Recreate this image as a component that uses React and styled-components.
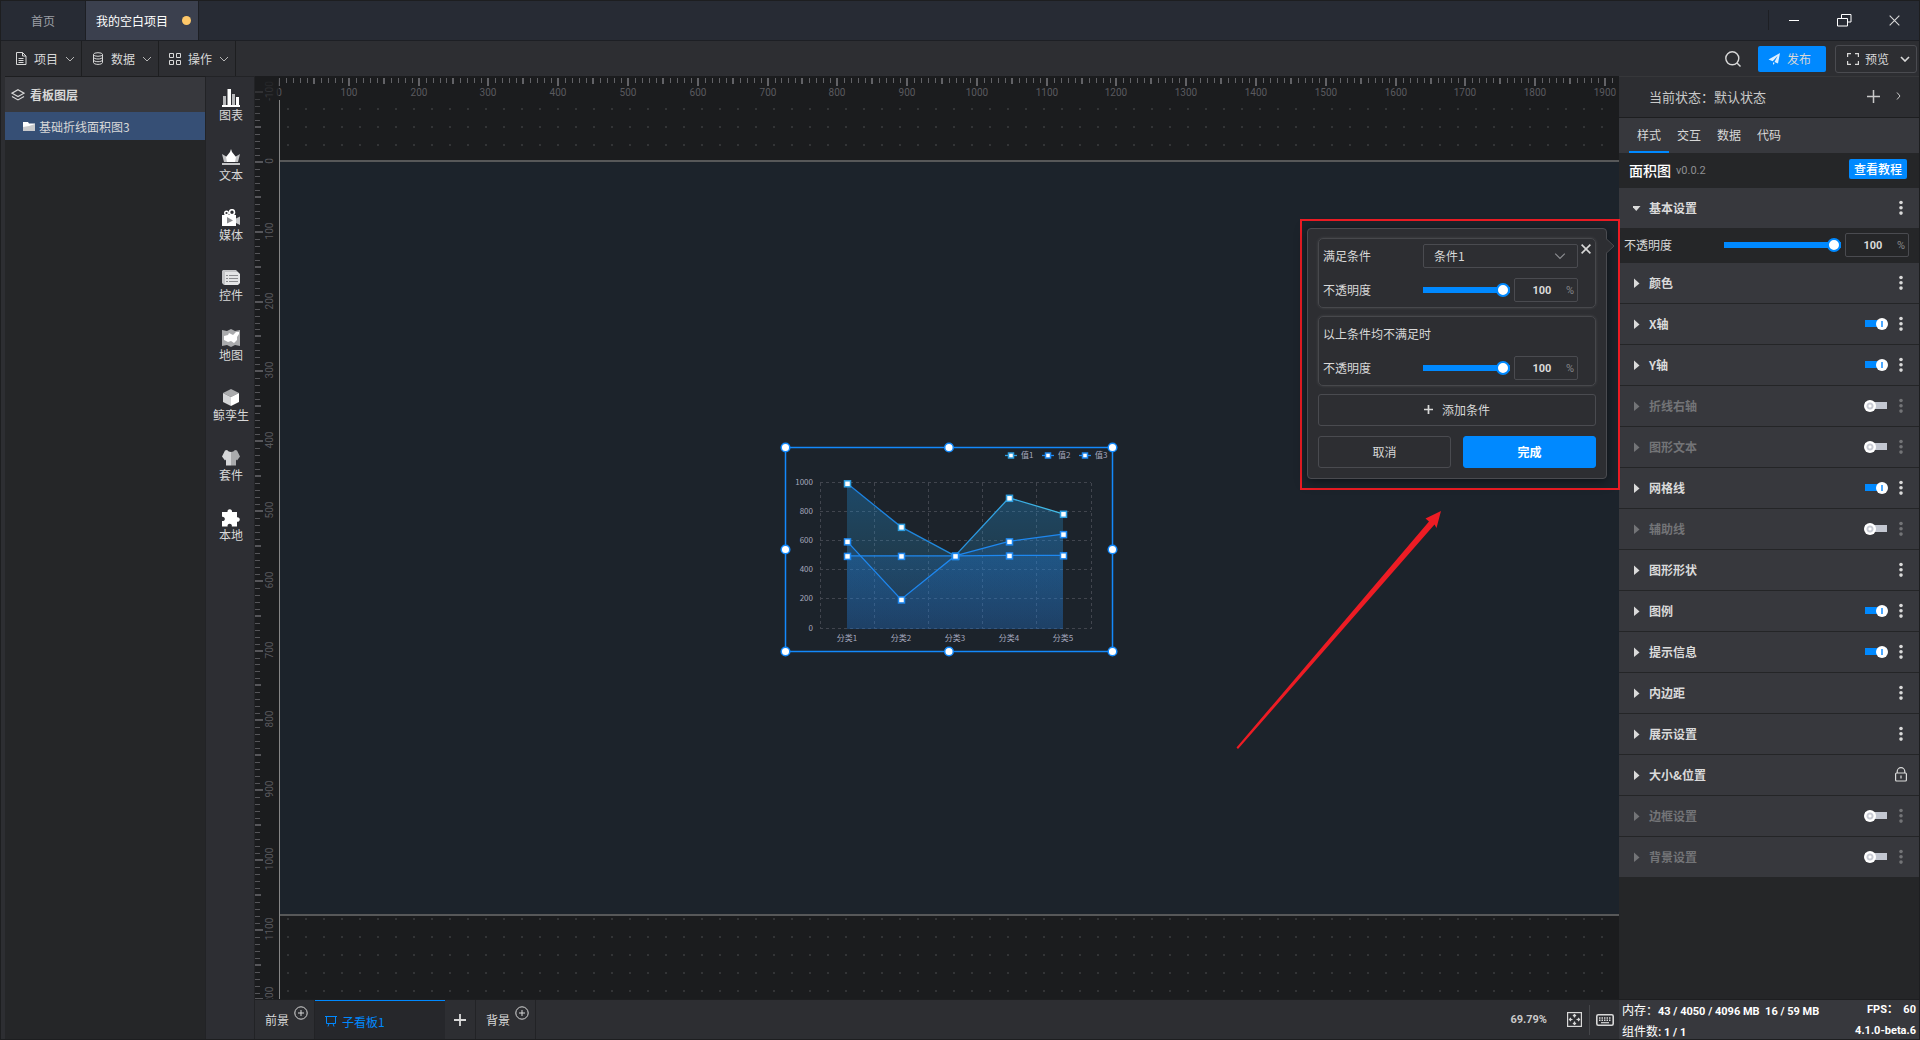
import React, { useLayoutEffect, useRef, useState } from 'react'
import styled, { createGlobalStyle, css } from 'styled-components'

const GlobalStyle = createGlobalStyle`
  * {
    box-sizing: border-box;
  }

  body {
    margin: 0;
    background: #1d1e20;
    color: #d8d8d8;
    font-family: 'Noto Sans CJK SC', sans-serif;
    font-size: 12px;
  }

  button, input, select {
    font: inherit;
    color: inherit;
    margin: 0;
  }

  button {
    background: none;
    border: none;
    padding: 0;
    cursor: pointer;
  }

  svg {
    display: block;
    flex: none;
  }
`

const digits = css`
  font-family: Roboto, 'Noto Sans CJK SC', sans-serif;
  font-size: 11px;
`

const Shell = styled.div`
  display: flex;
  flex-direction: column;
  height: 100vh;
  border: 1px solid #1d1e20;
  overflow: hidden;
`

/* ---------- title bar ---------- */

const TitleBar = styled.header`
  display: flex;
  flex: none;
  height: 40px;
  background: #272b34;
  border-bottom: 1px solid #1d1f24;
`

const ProjectTab = styled.button`
  display: flex;
  align-items: center;
  justify-content: space-between;
  width: ${(p) => (p.$active ? '113px' : '85px')};
  padding: 0 ${(p) => (p.$active ? '7px 0 10px' : '30px')};
  line-height: 16px;
  border-right: 1px solid #1d1f24;
  background: ${(p) => (p.$active ? '#3b404e' : 'transparent')};
  color: ${(p) => (p.$active ? '#fff' : '#9c9fa5')};
`

const Unsaved = styled.span`
  width: 9px;
  height: 9px;
  border-radius: 50%;
  background: #ffc869;
`

const WindowButtons = styled.div`
  display: flex;
  align-items: center;
  margin: 9px 0 10px auto;
  border-left: 1px solid #1d1f24;
`

const WindowButton = styled.button`
  display: flex;
  align-items: center;
  justify-content: center;
  width: 50px;
  height: 20px;
`

/* ---------- menu bar ---------- */

const MenuBar = styled.nav`
  display: flex;
  flex: none;
  align-items: stretch;
  height: 35px;
  padding: 0 2px 0 4px;
  background: #2d2e32;
`

const MenuItem = styled.button`
  display: flex;
  align-items: center;
  gap: 7px;
  width: 77px;
  padding: 0 0 0 10px;
  border-right: 1px solid #1d1e20;
  line-height: 16px;
`

const MenuActions = styled.div`
  display: flex;
  align-items: center;
  gap: 9px;
  margin-left: auto;
`

const SearchButton = styled.button`
  margin-right: 8px;
`

const PublishButton = styled.button`
  display: flex;
  align-items: center;
  gap: 7px;
  width: 68px;
  height: 26px;
  padding-left: 10px;
  border-radius: 2px;
  background: #0089ff;
`

const PreviewButton = styled.button`
  display: flex;
  align-items: center;
  gap: 6px;
  width: 82px;
  height: 28px;
  padding: 0 6px 0 11px;
  border: 1px solid #4a4b50;
  border-radius: 3px;

  svg:last-child {
    margin-left: auto;
  }
`

/* ---------- main ---------- */

const Main = styled.main`
  position: relative;
  display: flex;
  flex: 1;
  min-height: 0;
  background: #2d2e32;
`

const LayerPanel = styled.aside`
  width: 201px;
  flex: none;
  margin-left: 4px;
  background: #252628;
  border-top: 1px solid #1d1e20;
  border-right: 1px solid #222326;
`

const LayerTitle = styled.h2`
  display: flex;
  align-items: center;
  gap: 5px;
  height: 35px;
  margin: 0;
  padding-left: 6px;
  background: #37383d;
  font-size: 12px;
  font-weight: 700;
`

const LayerRow = styled.button`
  display: flex;
  align-items: center;
  gap: 4px;
  width: 100%;
  height: 28px;
  padding-left: 18px;
  background: #364f75;
`

const Rail = styled.nav`
  width: 48px;
  flex: none;
  background: #2d2e33;
  border-top: 1px solid #222326;
`

const RailItem = styled.button`
  display: flex;
  flex-direction: column;
  align-items: center;
  width: 100%;
  height: 60px;
  padding: 12px 0 0 2px;
  line-height: 16px;
  white-space: nowrap;
`

const Center = styled.section`
  display: flex;
  flex: 1;
  flex-direction: column;
  min-width: 0;
  border-left: 1px solid #222326;
`

const Workspace = styled.div`
  display: grid;
  grid-template-columns: 24px 1fr;
  grid-template-rows: 24px 1fr;
  flex: 1;
  min-height: 0;
  overflow: hidden;
  background: #1b1c1e;
`

const TopRuler = styled.svg`
  grid-area: 1 / 2;
  width: 100%;
  height: 24px;
  overflow: visible;
`

const SideRuler = styled.svg`
  grid-area: 1 / 1 / 3 / 2;
  width: 24px;
  height: 100%;
`

const TickLabel = styled.text`
  ${digits}
  font-size: 10px;
  fill: #5a5a5e;
  text-anchor: middle;
`

const Stage = styled.div`
  grid-area: 2 / 2;
  min-width: 0;
  overflow: hidden;
  padding-top: 60px;
  border-left: 1px solid #858585;
  background: conic-gradient(from 270deg at 2px 2px, #333436 90deg, transparent 0)
    7px 8px / 18px 18px;
`

const Board = styled.div`
  position: relative;
  height: 756px;
  border: solid #575859;
  border-width: 2px 0;
  background: #1c232b;
`

const ChartNode = styled.svg`
  position: absolute;
  left: 500px;
  top: 280px;
  font-family: 'Noto Sans CJK SC', sans-serif;
  font-size: 8px;
  fill: #a5a8bd;
`

/* ---------- bottom bar ---------- */

const BottomBar = styled.footer`
  display: flex;
  flex: none;
  align-items: stretch;
  height: 40px;
  border-top: 1px solid #1d1e20;
`

const LayerTab = styled.button`
  display: flex;
  gap: 5px;
  padding: 12px 6px 0 10px;
  line-height: 16px;
  border-right: 1px solid #222326;

  svg {
    margin-top: -6px;
  }
`

const BoardTab = styled.button`
  display: flex;
  align-items: center;
  gap: 5px;
  width: 130px;
  padding: 2px 0 0 10px;
  border-top: 1px solid #0089ff;
  background: #26272b;
  color: #0089ff;
`

const AddBoard = styled.button`
  display: flex;
  align-items: center;
  justify-content: center;
  width: 31px;
  border-right: 1px solid #222326;
`

const ViewTools = styled.div`
  display: flex;
  align-items: center;
  margin-left: auto;
  padding-right: 5px;
`

const Zoom = styled.span`
  ${digits}
  margin-right: 20px;
  font-weight: 700;
  color: #c9c9c9;
`

const Divider = styled.span`
  width: 1px;
  height: 30px;
  margin: 0 6px 0 7px;
  background: #45464a;
`

/* ---------- property panel ---------- */

const PropertyPanel = styled.aside`
  display: flex;
  flex-direction: column;
  flex: none;
  width: 300px;
  border-top: 1px solid #36373a;
  background: #252628;
`

const StateBar = styled.div`
  display: flex;
  align-items: center;
  height: 41px;
  padding: 0 18px 2px 30px;
  background: #2d2e32;
  border-bottom: 1px solid #1d1e20;
  font-size: 13px;
  color: #c9c9c9;

  button:first-of-type {
    margin-left: auto;
    margin-right: 16px;
  }
`

const PanelTabs = styled.div`
  display: flex;
  height: 35px;
  padding-left: 10px;
  background: #37383d;
`

const PanelTab = styled.button`
  width: 40px;
  border-bottom: 2px solid ${(p) => (p.$active ? '#0089ff' : 'transparent')};
`

const WidgetTitle = styled.div`
  display: flex;
  align-items: center;
  gap: 5px;
  height: 35px;
  padding: 0 12px 2px 10px;
`

const WidgetName = styled.h2`
  margin: 0;
  font-size: 14px;
  font-weight: 500;
  line-height: 20px;
  color: #fff;
`

const Version = styled.span`
  ${digits}
  padding-top: 2px;
  color: #8f9093;
`

const TutorialButton = styled.button`
  width: 58px;
  height: 20px;
  margin: 0 0 2px auto;
  border-radius: 2px;
  background: #0089ff;
  color: #fff;
  font-weight: 500;
  line-height: 20px;
`

const SectionRow = styled.div`
  display: flex;
  align-items: center;
  gap: 6px;
  height: ${(p) => (p.$last ? '40px' : '41px')};
  padding: 0 11px 1px 14px;
  border-bottom: ${(p) => (p.$last ? 'none' : '1px solid #242527')};
  background: #37383d;
  color: ${(p) => (p.$off ? '#737477' : '#dadada')};
`

const SectionButton = styled.button`
  display: flex;
  align-items: center;
  gap: 4px;
  margin-right: auto;
  font-weight: 700;
  line-height: 16px;
`

const Toggle = styled.input`
  position: relative;
  width: 24px;
  height: 12px;
  margin: 0;
  appearance: none;
  background: linear-gradient(#c3c7d1, #c3c7d1) center / 22px 7px no-repeat;
  border-radius: 4px;

  &::after {
    content: '';
    position: absolute;
    left: 0;
    top: 0;
    width: 12px;
    height: 12px;
    border-radius: 50%;
    background: radial-gradient(circle, #fff 1px, #c9ccd5 2px, #c9ccd5 3px, #fff 4px);
  }

  &:checked {
    background-image: linear-gradient(#0089ff, #0089ff);
  }

  &:checked::after {
    left: 12px;
    background: linear-gradient(#4da9ff, #4da9ff) center / 2px 6px no-repeat #fff;
  }
`

const OpacityRow = styled.div`
  display: flex;
  align-items: center;
  height: 35px;
  padding: 0 10px 1px 5px;
  gap: 4px;
`

const FieldLabel = styled.label`
  width: 96px;
  line-height: 16px;
`

const Slider = styled.input`
  flex: 1;
  min-width: 0;
  height: 14px;
  appearance: none;
  background: linear-gradient(#0089ff, #0089ff) center / 100% 6px no-repeat;
  border-radius: 3px;

  &::-webkit-slider-thumb {
    appearance: none;
    width: 14px;
    height: 14px;
    border: 2px solid #0089ff;
    border-radius: 50%;
    background: #fff;
  }
`

const NumberBox = styled.span`
  ${digits}
  display: flex;
  align-items: center;
  width: 64px;
  height: 24px;
  padding-right: 3px;
  border: 1px solid #4a4b50;
  border-radius: 2px;
  color: #85868a;
`

const NumberInput = styled.input`
  flex: 1;
  min-width: 0;
  padding: 0 0 0 3px;
  border: none;
  outline: none;
  background: none;
  color: #dadada;
  font-weight: 700;
  text-align: center;
`

const StatusBar = styled.footer`
  ${digits}
  display: grid;
  grid-template-columns: 1fr auto;
  height: 40px;
  margin-top: auto;
  padding: 0 3px;
  border-top: 1px solid #1d1e20;
  background: #37383d;
  color: #fff;
  font-weight: 700;
  line-height: 19px;
  white-space: pre;

  span:nth-child(even) {
    text-align: right;
  }
`

const StatusWord = styled.b`
  font-family: 'Noto Sans CJK SC', sans-serif;
  font-size: 12px;
  font-weight: 400;
`

/* ---------- condition popover ---------- */

const Highlight = styled.div`
  position: absolute;
  top: 143px;
  right: 299px;
  padding: 7px 11px 9px 5px;
  border: 2px solid #ed1c24;
`

const Popover = styled.form`
  position: relative;
  display: flex;
  flex-direction: column;
  width: 300px;
  padding: 9px 10px 10px;
  border: 1px solid #4a4b50;
  border-radius: 4px;
  background: #2d2e32;
  box-shadow: 0 2px 12px rgba(0, 0, 0, 0.5);
`

const Caret = styled.svg`
  position: absolute;
  left: 298px;
  top: 9px;
`

const Card = styled.div`
  margin-bottom: 8px;
  padding: 0 17px 0 4px;
  border: 1px solid #47484c;
  border-radius: 5px;
  box-shadow: 0 0 3px rgba(255, 255, 255, 0.12);
`

const CardRow = styled.div`
  display: flex;
  align-items: center;
  height: 34px;
  padding-bottom: ${(p) => (p.$text ? '2px' : '0')};
  gap: 4px;
`

const SelectBox = styled.span`
  position: relative;
  flex: 1;

  svg {
    position: absolute;
    right: 12px;
    top: 8px;
    pointer-events: none;
  }
`

const Select = styled.select`
  display: block;
  width: 100%;
  height: 24px;
  padding: 0 10px 1px;
  appearance: none;
  border: 1px solid #4a4b50;
  border-radius: 2px;
  background: #2d2e32;
`

const CloseButton = styled.button`
  position: absolute;
  right: 15px;
  top: 15px;
`

const Buttons = styled.div`
  display: grid;
  grid-template-columns: 1fr 1fr;
  gap: 12px;
  margin-top: 10px;
`

const FormButton = styled.button`
  display: flex;
  align-items: center;
  justify-content: center;
  gap: 9px;
  height: 32px;
  padding-bottom: 1px;
  border: 1px solid ${(p) => (p.$primary ? '#0089ff' : '#4a4b50')};
  border-radius: 3px;
  background: ${(p) => (p.$primary ? '#0089ff' : 'transparent')};
  color: ${(p) => (p.$primary ? '#fff' : '#d8d8d8')};
  font-weight: ${(p) => (p.$primary ? 700 : 400)};
`

const Pointer = styled.svg`
  position: absolute;
  top: 434px;
  right: 477px;
  pointer-events: none;
`

/* ---------- icons ---------- */

const Line = ({ w = 12, h = 12, box, sw = 1, children, ...rest }) => (
  <svg
    width={w}
    height={h}
    viewBox={box || `0 0 ${w} ${h}`}
    fill='none'
    stroke='currentColor'
    strokeWidth={sw}
    {...rest}
  >
    {children}
  </svg>
)

const Chevron = ({ w = 10, sw = 1, color = '#b5b5b5' }) => (
  <Line w={w} h={w === 10 ? 6 : 8} box='0 0 10 6' sw={sw} stroke={color}>
    <path d='M1 1l4 4 4-4' />
  </Line>
)

const FileIcon = () => (
  <Line w={12} h={13}>
    <path d='M1.5 .5h6l3.5 3.5v8.5h-9.5zM7.5 .5v3.5h3.5M3.5 6.5h5M3.5 8.5h5M3.5 10.5h5' />
  </Line>
)

const DataIcon = () => (
  <Line w={12} h={13}>
    <ellipse cx='6' cy='2.5' rx='4.5' ry='1.8' />
    <path d='M1.5 2.5v8c0 1 2 1.9 4.5 1.9s4.5-.9 4.5-1.9v-8M1.5 5.2c0 1 2 1.8 4.5 1.8s4.5-.8 4.5-1.8M1.5 7.9c0 1 2 1.8 4.5 1.8s4.5-.8 4.5-1.8' />
  </Line>
)

const GridIcon = () => (
  <Line w={12} h={12}>
    <path d='M.5 .5h4v4h-4zM7.5 .5h4v4h-4zM.5 7.5h4v4h-4zM7.5 7.5h4v4h-4z' />
  </Line>
)

const LayersIcon = () => (
  <Line w={14} h={12} sw={1.2}>
    <path d='M7 .8l6 3.4-6 3.4-6-3.4zM1 7.5l6 3.4 6-3.4' />
  </Line>
)

const Dots = () => (
  <svg width='14' height='16' viewBox='0 0 14 16' fill='currentColor'>
    <circle cx='7' cy='2.5' r='1.8' />
    <circle cx='7' cy='7.8' r='1.8' />
    <circle cx='7' cy='13.1' r='1.8' />
  </svg>
)

const LockIcon = () => (
  <Line w={14} h={16} sw={1.2}>
    <rect x='1.6' y='6' width='10.8' height='8' rx='1' />
    <path d='M3.2 6v-1.5a3.8 3.8 0 0 1 7.6 0v1.5M7 8.5v3' />
  </Line>
)

const Triangle = ({ open }) => (
  <svg width='12' height='10' viewBox='0 0 12 10' fill='currentColor'>
    <path d={open ? 'M-1 3h8.500l-4.250 5z' : 'M1 .5l5.5 5-5.5 4.5z'} overflow='visible' />
  </svg>
)

const PlusCircle = () => (
  <Line w={14} h={14}>
    <circle cx='7' cy='7' r='6.2' />
    <path d='M4 7h6M7 4v6' />
  </Line>
)

const Plus = ({ size = 13, sw = 1.5 }) => (
  <Line w={size} h={size} box='0 0 13 13' sw={sw}>
    <path d='M0 6.5h13M6.5 0v13' />
  </Line>
)

const Cross = ({ size = 10, sw = 1.6 }) => (
  <Line w={size} h={size} box='0 0 10 10' sw={sw}>
    <path d='M.6 .6l8.8 8.8M9.4 .6l-8.8 8.8' />
  </Line>
)

const railItems = [
  {
    name: '图表',
    icon: (
      <>
        <path fill='#b9babc' d='M1 7h3v9h-3zM10 5h3v11h-3z' />
        <path fill='#fff' d='M5.5 0h3.5v16h-3.5zM14 8h3v8h-3zM0 16h18v2h-18z' />
      </>
    ),
  },
  {
    name: '文本',
    icon: (
      <>
        <path fill='#c4c5c7' d='M0 5l5 3h8l5-3-2 8h-14zM0 14h18v2h-18z' />
        <path fill='#fff' d='M9 0l1 3 4 5-1 5h-8l-1-5 4-5z' />
      </>
    ),
  },
  {
    name: '媒体',
    icon: (
      <>
        <circle cx='4.5' cy='4' r='1.8' fill='none' stroke='#fff' strokeWidth='1.4' />
        <circle cx='10' cy='3.2' r='2.5' fill='none' stroke='#fff' strokeWidth='1.6' />
        <path fill='#c9cacc' d='M13 10l5-2.5v8.5l-5-2.5z' />
        <path fill='#fff' d='M0 6h14v11h-14z' />
        <path fill='#8b8c8f' d='M5 8l6 3.5-6 3z' />
      </>
    ),
  },
  {
    name: '控件',
    icon: (
      <>
        <path fill='#c4c5c7' d='M0 2l1-1h13l2 2v13h-14l-2-2z' />
        <path fill='#e4e5e6' d='M3 3h13l2 2v9l-2 2h-13z' />
        <path fill='#8b8c8f' d='M4 6h2v1h-2zM7 6h9v1h-9zM4 9h2v1h-2zM7 9h9v1h-9zM4 12h2v1h-2zM7 12h9v1h-9z' />
      </>
    ),
  },
  {
    name: '地图',
    icon: (
      <>
        <path fill='#a9aaac' d='M0 1l5 1 4-2 4 2 5-1v16l-5-1-4 2-4-2-5 1z' />
        <path fill='#fff' d='M2 7l4-1 1-2 4 2 3-3h3v2l-2 3v3l-3 3-3-2-3 1-4-2z' />
      </>
    ),
  },
  {
    name: '鲸孪生',
    icon: (
      <>
        <path fill='#a9aaac' d='M9 0l8 4-8 4-8-4z' />
        <path fill='#d5d6d8' d='M1 4l8 4v9l-8-4z' />
        <path fill='#fff' d='M17 4l-8 4v9l8-4z' />
      </>
    ),
  },
  {
    name: '套件',
    icon: (
      <>
        <path fill='#d5d6d8' d='M5 1q1.5 2 4 2v13.5h-5v-6l-1 1-3-4 3-6z' />
        <path fill='#a9aaac' d='M13 1q-1.5 2-4 2v13.5h5v-6l1 1 3-4-3-6z' />
      </>
    ),
  },
  {
    name: '本地',
    icon: (
      <path
        fill='#fff'
        d='M0 3h5.5a2.3 2.3 0 1 1 4.5 0h5v5.2a2.3 2.3 0 1 1 0 4.5v4.8h-5.2a2.2 2.2 0 1 0-4.2 0h-5.6v-5.5a2.2 2.2 0 1 0 0-4.2z'
      />
    ),
  },
]

const sections = [
  { name: '颜色' },
  { name: 'X轴', on: true },
  { name: 'Y轴', on: true },
  { name: '折线右轴', on: false },
  { name: '图形文本', on: false },
  { name: '网格线', on: true },
  { name: '辅助线', on: false },
  { name: '图形形状' },
  { name: '图例', on: true },
  { name: '提示信息', on: true },
  { name: '内边距' },
  { name: '展示设置' },
  { name: '大小&位置', lock: true },
  { name: '边框设置', on: false },
  { name: '背景设置', on: false },
]

/* ---------- rulers ---------- */

// screen pixels for ten board pixels at the current zoom
const STEP = 6.979

const ticks = (from, to) =>
  Array.from({ length: Math.max(0, to - from + 1) }, (_, i) => {
    const n = from + i
    const major = n % 10 === 0
    const half = n % 5 === 0
    return { n, major, at: Math.round(n * STEP), size: major ? 8 : half ? 6 : 5, w: half ? 2 : 1 }
  })

const Rulers = () => {
  const ref = useRef(null)
  const [size, setSize] = useState({ width: 0, height: 0 })

  useLayoutEffect(() => {
    const measure = () =>
      setSize({
        width: ref.current.parentNode.clientWidth - 24,
        height: ref.current.parentNode.clientHeight,
      })
    measure()
    window.addEventListener('resize', measure)
    return () => window.removeEventListener('resize', measure)
  }, [])

  return (
    <>
      <TopRuler ref={ref}>
        {ticks(0, Math.floor(size.width / STEP)).map((t) => (
          <React.Fragment key={t.n}>
            <rect x={t.at - Math.floor(t.w / 2)} y='2' width={t.w} height={t.size} fill='#626266' />
            {t.major && (
              <TickLabel x={t.at} y='20'>
                {t.n * 10}
              </TickLabel>
            )}
          </React.Fragment>
        ))}
      </TopRuler>
      <SideRuler>
        <defs>
          <linearGradient id='fade' x1='0' y1='0' x2='0' y2='1'>
            <stop offset='0' stopColor='#1b1c1e' />
            <stop offset='1' stopColor='#1b1c1e' stopOpacity='0' />
          </linearGradient>
        </defs>
        {ticks(-10, Math.floor((size.height - 84) / STEP) + 1).map((t) => (
          <React.Fragment key={t.n}>
            <rect x='0' y={86 + t.at - Math.floor(t.w / 2)} width={t.size} height={t.w} fill='#56565a' />
            {t.major && (
              <TickLabel transform={`translate(18 ${85 + t.at}) rotate(-90)`}>{t.n * 10}</TickLabel>
            )}
          </React.Fragment>
        ))}
        <rect width='24' height='44' fill='url(#fade)' />
      </SideRuler>
    </>
  )
}

/* ---------- area chart ---------- */

const xs = [67, 121, 175, 229, 283]
const yOf = (v) => 186.5 - v * 0.1452
const series = [
  { name: '值1', data: [1000, 700, 500, 900, 790], stroke: 'url(#cyan)', fill: 'url(#areaCyan)', edge: '#2f9fe0' },
  { name: '值2', data: [600, 200, 500, 600, 650], stroke: '#1e88f0', fill: 'url(#areaBlue)', edge: '#1e88f0' },
  { name: '值3', data: [500, 500, 500, 503, 504], stroke: '#1e88f0', fill: 'url(#areaBlue)', edge: '#1e88f0' },
]

const Chart = () => (
  <ChartNode width='338' height='215' viewBox='0 0 338 215'>
    <defs>
      <linearGradient id='cyan'>
        <stop offset='0' stopColor='#1a7fe0' />
        <stop offset='0.45' stopColor='#2089dc' />
        <stop offset='1' stopColor='#46bfe6' />
      </linearGradient>
      <linearGradient id='areaCyan' x1='0' y1='0' x2='0' y2='1'>
        <stop offset='0' stopColor='#1e90e0' stopOpacity='0.34' />
        <stop offset='1' stopColor='#40b8e0' stopOpacity='0.05' />
      </linearGradient>
      <linearGradient id='areaBlue' x1='0' y1='0' x2='0' y2='1'>
        <stop offset='0' stopColor='#1e88f0' stopOpacity='0.19' />
        <stop offset='1' stopColor='#1e78e8' stopOpacity='0.15' />
      </linearGradient>
    </defs>

    <g stroke='#41454e' strokeDasharray='3 3' fill='none'>
      {[0, 200, 400, 600, 800, 1000].map((v) => (
        <path key={v} d={`M40 ${Math.round(yOf(v)) - 0.5}H311`} />
      ))}
      {[40.5, 94.5, 148.5, 202.5, 256.5, 311.5].map((x) => (
        <path key={x} d={`M${x} 41V187`} />
      ))}
    </g>
    {[0, 200, 400, 600, 800, 1000].map((v) => (
      <text key={v} x='33' y={yOf(v) + 2} textAnchor='end'>
        {v}
      </text>
    ))}
    {xs.map((x, i) => (
      <text key={x} x={x} y='199' textAnchor='middle'>
        {`分类${i + 1}`}
      </text>
    ))}

    {series.map((s) => {
      const points = s.data.map((v, i) => `${xs[i]},${yOf(v)}`).join(' ')
      return (
        <g key={s.name}>
          <polygon points={`67,187 ${points} 283,187`} fill={s.fill} />
          <polyline points={points} fill='none' stroke={s.stroke} strokeWidth='1.3' />
        </g>
      )
    })}
    {series.map((s, n) =>
      s.data.map((v, i) => (
        <rect
          key={`${n}-${i}`}
          x={xs[i] - 2.5}
          y={yOf(v) - 2.5}
          width='6'
          height='6'
          fill='#fff'
          stroke={s.edge}
          strokeWidth='1.5'
        />
      ))
    )}

    {series.map((s, i) => (
      <g key={s.name} transform={`translate(${231 + i * 37} 13.5)`}>
        <path d='M-6 0h12' stroke={s.edge} strokeWidth='1.3' />
        <rect x='-2.5' y='-2.5' width='5' height='5' fill='#fff' stroke={s.edge} strokeWidth='1.5' />
        <text x='10' y='2.5'>
          {s.name}
        </text>
      </g>
    ))}

    <rect x='5.5' y='5.5' width='327' height='204' fill='none' stroke='#1389fb' strokeWidth='1.5' />
    {[5.5, 169, 332.5].map((x) =>
      [5.5, 107.5, 209.5]
        .filter((y) => x !== 169 || y !== 107.5)
        .map((y) => (
          <circle key={`${x}-${y}`} cx={x} cy={y} r='4.3' fill='#fff' stroke='#1389fb' strokeWidth='1.5' />
        ))
    )}
  </ChartNode>
)

const OpacityFields = ({ id }) => (
  <>
    <Slider id={id} type='range' min='0' max='100' defaultValue='100' />
    <NumberBox>
      <NumberInput type='text' defaultValue='100' aria-label='不透明度' />%
    </NumberBox>
  </>
)

const ConditionPopover = () => (
  <Highlight>
    <Popover>
      <Caret width='9' height='16' viewBox='0 0 9 16'>
        <path d='M0 .5l8 7.5-8 7.5' fill='#2d2e32' stroke='#4a4b50' />
      </Caret>
      <Card>
        <CardRow>
          <FieldLabel htmlFor='condition'>满足条件</FieldLabel>
          <SelectBox>
            <Select id='condition' defaultValue='1'>
              <option value='1'>条件1</option>
            </Select>
            <Chevron w={12} color='#8b8c90' />
          </SelectBox>
        </CardRow>
        <CardRow>
          <FieldLabel htmlFor='opacity-if'>不透明度</FieldLabel>
          <OpacityFields id='opacity-if' />
        </CardRow>
      </Card>
      <Card>
        <CardRow $text>以上条件均不满足时</CardRow>
        <CardRow>
          <FieldLabel htmlFor='opacity-else'>不透明度</FieldLabel>
          <OpacityFields id='opacity-else' />
        </CardRow>
      </Card>
      <FormButton type='button'>
        <Plus size={9} sw={2.5} />
        添加条件
      </FormButton>
      <Buttons>
        <FormButton type='button'>取消</FormButton>
        <FormButton type='button' $primary>完成</FormButton>
      </Buttons>
      <CloseButton type='button' aria-label='关闭'>
        <Cross />
      </CloseButton>
    </Popover>
  </Highlight>
)

const Properties = () => (
  <PropertyPanel>
    <StateBar>
      当前状态：默认状态
      <button aria-label='添加状态'>
        <Plus />
      </button>
      <button aria-label='展开'>
        <Line w={5} h={8}>
          <path d='M1 .5l3 3.5-3 3.5' />
        </Line>
      </button>
    </StateBar>
    <PanelTabs>
      {['样式', '交互', '数据', '代码'].map((name, i) => (
        <PanelTab key={name} $active={i === 0}>
          {name}
        </PanelTab>
      ))}
    </PanelTabs>
    <WidgetTitle>
      <WidgetName>面积图</WidgetName>
      <Version>v0.0.2</Version>
      <TutorialButton>查看教程</TutorialButton>
    </WidgetTitle>
    <SectionRow $last>
      <SectionButton>
        <Triangle open />
        基本设置
      </SectionButton>
      <Dots />
    </SectionRow>
    <OpacityRow>
      <FieldLabel htmlFor='opacity'>不透明度</FieldLabel>
      <OpacityFields id='opacity' />
    </OpacityRow>
    {sections.map((s, i) => (
      <SectionRow key={s.name} $off={s.on === false} $last={i === sections.length - 1}>
        <SectionButton>
          <Triangle />
          {s.name}
        </SectionButton>
        {s.on !== undefined && <Toggle type='checkbox' defaultChecked={s.on} aria-label={s.name} />}
        {s.lock ? <LockIcon /> : <Dots />}
      </SectionRow>
    ))}
    <StatusBar>
      <span>
        <StatusWord>内存：</StatusWord>43 / 4050 / 4096 MB  16 / 59 MB
      </span>
      <span>FPS：  60</span>
      <span>
        <StatusWord>组件数:</StatusWord> 1 / 1
      </span>
      <span>4.1.0-beta.6</span>
    </StatusBar>
  </PropertyPanel>
)

const App = () => {
  return (
    <Shell>
      <GlobalStyle />
      <TitleBar>
        <ProjectTab>首页</ProjectTab>
        <ProjectTab $active>
          我的空白项目
          <Unsaved />
        </ProjectTab>
        <WindowButtons>
          <WindowButton aria-label='最小化'>
            <Line w={12} h={12}>
              <path d='M1 6.5h10' stroke='#fff' />
            </Line>
          </WindowButton>
          <WindowButton aria-label='还原'>
            <Line w={15} h={13} stroke='#fff'>
              <path d='M.5 4.5h10v7.5h-10zM4.5 4v-3.5h9.5v7.5h-3.5' />
            </Line>
          </WindowButton>
          <WindowButton aria-label='关闭窗口'>
            <Cross size={11} sw={1} />
          </WindowButton>
        </WindowButtons>
      </TitleBar>

      <MenuBar>
        <MenuItem><FileIcon />项目<Chevron /></MenuItem>
        <MenuItem><DataIcon />数据<Chevron /></MenuItem>
        <MenuItem><GridIcon />操作<Chevron /></MenuItem>
        <MenuActions>
          <SearchButton aria-label='搜索'>
            <Line w={16} h={16} sw={1.4}>
              <circle cx='7.3' cy='7.3' r='6.5' />
              <path d='M12 12l3.5 3.5' />
            </Line>
          </SearchButton>
          <PublishButton>
            <svg width='12' height='12' viewBox='0 0 12 12' fill='#dcefff'>
              <path d='M12 0l-2 10.5-3.5-1.5 3-6-4.8 5.3-4.2-1.8zM5 9.2l1.7.8-1.7 2z' />
            </svg>
            发布
          </PublishButton>
          <PreviewButton>
            <Line w={12} h={12} sw={1.2}>
              <path d='M.6 4v-3.4h3.4M8 .6h3.4v3.4M11.4 8v3.4h-3.4M4 11.4h-3.4v-3.4' />
            </Line>
            预览
            <Chevron sw={1.6} color='#dadada' />
          </PreviewButton>
        </MenuActions>
      </MenuBar>

      <Main>
        <LayerPanel>
          <LayerTitle>
            <LayersIcon />
            看板图层
          </LayerTitle>
          <LayerRow>
            <svg width='12' height='9' viewBox='0 0 12 9'>
              <path d='M0 0h5l1 1.5h6v7.5h-12z' fill='#fff' />
              <path d='M0 5l6-1 6-2v7h-12z' fill='#c9cacc' />
            </svg>
            基础折线面积图3
          </LayerRow>
        </LayerPanel>

        <Rail>
          {railItems.map((item) => (
            <RailItem key={item.name}>
              <svg width='18' height='18' viewBox='0 0 18 18'>
                {item.icon}
              </svg>
              {item.name}
            </RailItem>
          ))}
        </Rail>

        <Center>
          <Workspace>
            <Rulers />
            <Stage>
              <Board>
                <Chart />
              </Board>
            </Stage>
          </Workspace>
          <BottomBar>
            <LayerTab>前景<PlusCircle /></LayerTab>
            <BoardTab>
              <Line w={12} h={12}>
                <path d='M0 1.5h12M1.5 1.5v7h9v-7M4 8.5l-1 3M8 8.5l1 3' />
              </Line>
              子看板1
            </BoardTab>
            <AddBoard aria-label='添加看板'>
              <Plus size={12} sw={2} />
            </AddBoard>
            <LayerTab>背景<PlusCircle /></LayerTab>
            <ViewTools>
              <Zoom>69.79%</Zoom>
              <Line w={15} h={15} sw={1.2}>
                <rect x='.6' y='.6' width='13.8' height='13.8' />
                <path d='M7.5 2v3.5M7.5 9.5v3.5M2 7.5h3.5M9.5 7.5h3.5M6 4l1.5-1.5 1.5 1.5M6 11l1.5 1.5 1.5-1.5M4 6l-1.5 1.5 1.5 1.5M11 6l1.5 1.5-1.5 1.5' />
              </Line>
              <Divider />
              <Line w={18} h={12} sw={1.6}>
                <rect x='.8' y='.8' width='16.4' height='10.4' rx='1.5' />
                <path d='M3 4h12M3 6.3h12' strokeDasharray='1.5 1' strokeWidth='1.4' />
                <path d='M5 8.7h8' strokeWidth='1.2' />
              </Line>
            </ViewTools>
          </BottomBar>
        </Center>

        <Properties />
        <ConditionPopover />
        <Pointer width='206' height='240' viewBox='0 0 206 240' fill='#ed1c24'>
          <path d='M205 1l-4.5 17-2-3.5-196.500 224.500-1.5-1.5 192.5-226-3.5-3z' />
        </Pointer>
      </Main>
    </Shell>
  )
}

export default App
